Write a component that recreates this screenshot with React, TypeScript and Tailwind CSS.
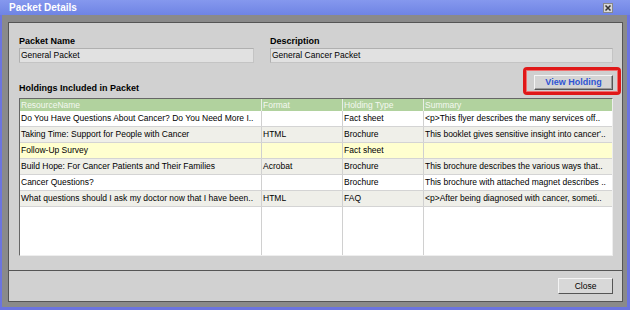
import React from "react";

const rows = [
  { name: "Do You Have Questions About Cancer? Do You Need More I..", format: "", type: "Fact sheet", summary: "<p>This flyer describes the many services off..", bg: "bg-white" },
  { name: "Taking Time: Support for People with Cancer", format: "HTML", type: "Brochure", summary: "This booklet gives sensitive insight into cancer'..", bg: "bg-[#efefe9]" },
  { name: "Follow-Up Survey", format: "", type: "Fact sheet", summary: "", bg: "bg-[#ffffcf]" },
  { name: "Build Hope: For Cancer Patients and Their Families", format: "Acrobat", type: "Brochure", summary: "This brochure describes the various ways that..", bg: "bg-[#efefe9]" },
  { name: "Cancer Questions?", format: "", type: "Brochure", summary: "This brochure with attached magnet describes ..", bg: "bg-white" },
  { name: "What questions should I ask my doctor now that I have been..", format: "HTML", type: "FAQ", summary: "<p>After being diagnosed with cancer, someti..", bg: "bg-[#efefe9]" },
];

const cols = ["w-[242px] shrink-0", "w-[81px] shrink-0", "w-[81px] shrink-0", "flex-1 min-w-0"];

export default function App() {
  return (
    <div
      className="w-[630px] h-[310px] bg-[#6b74e0] flex flex-col pl-[2px] pr-[3px] pb-[3px] overflow-hidden"
      style={{ fontFamily: '"Liberation Sans", Arial, sans-serif' }}
    >
      {/* Title bar */}
      <div className="h-[15px] -ml-[2px] -mr-[3px] pl-[9px] pr-[17px] flex items-center justify-between bg-gradient-to-b from-[#8598ee] to-[#6f84e4]">
        <span className="text-white font-bold text-[10px] leading-none">Packet Details</span>
        <div className="w-[10px] h-[10px] bg-[#d8d8d8] border border-[#888] flex items-center justify-center">
          <svg width="8" height="8" viewBox="0 0 8 8">
            <path d="M1.5 1.5 L6.5 6.5 M6.5 1.5 L1.5 6.5" stroke="#333" strokeWidth="1.5" />
          </svg>
        </div>
      </div>
      {/* Gray body */}
      <div className="flex-1 min-w-0 bg-[#8a8a8a] pt-[7px] pl-[6px] pr-[4px] pb-[5px] flex">
        <div className="flex-1 min-w-0 bg-[#d1d1d1] border border-[#555] flex flex-col">
          <div className="h-[247px] pl-[10px] pr-[9px] pt-[12px] flex flex-col min-w-0">
            {/* Fields */}
            <div className="flex gap-[16px] min-w-0">
              <div className="w-[235px] shrink-0 flex flex-col">
                <span className="font-bold text-[9px] leading-[12px] text-black">Packet Name</span>
                <div className="mt-[1px] h-[15px] bg-[#e1e1e1] border border-[#c4c4c4] border-t-[#b0b0b0] border-l-[#b0b0b0] flex items-center px-[1px] text-[8.5px] text-black">
                  General Packet
                </div>
              </div>
              <div className="flex-1 min-w-0 flex flex-col">
                <span className="font-bold text-[9px] leading-[12px] text-black">Description</span>
                <div className="mt-[1px] h-[15px] bg-[#e1e1e1] border border-[#c4c4c4] border-t-[#b0b0b0] border-l-[#b0b0b0] flex items-center px-[1px] text-[8.5px] text-black">
                  General Cancer Packet
                </div>
              </div>
            </div>
            {/* Holdings label + button */}
            <div className="mt-[4px] flex justify-between items-end">
              <span className="font-bold text-[9px] leading-[12px] text-black mb-[1px]">Holdings Included in Packet</span>
              <div className="-mr-[8px] rounded-[4px] border-[3px] border-[#e01818] shadow-[inset_0_0_0_1px_#f07070] pl-[8px] pr-[5px] pt-[5px] pb-[2px] bg-[#cfcfcf]">
                <div className="w-[79px] h-[15px] bg-[#d4d4d4] border border-[#f4f4f4] border-r-[#555] border-b-[#555] shadow-[inset_-1px_-1px_0_#999] flex items-center justify-center">
                  <span className="text-[#2f55d4] font-bold text-[9px] leading-none">View Holding</span>
                </div>
              </div>
            </div>
            {/* Grid */}
            <div className="mt-[3px] h-[158px] bg-white border border-[#666] border-r-[#eee] border-b-[#eee] flex flex-col text-[8.5px] min-w-0 overflow-hidden">
              <div className="h-[12px] bg-[#b1d29e] flex text-[#f4f8f0] leading-[12px]">
                {["ResourceName", "Format", "Holding Type", "Summary"].map((h, i) => (
                  <div key={h} className={`${cols[i]} ${i < 3 ? "border-r border-[#e8eee4]" : ""} pl-[1px] whitespace-nowrap overflow-hidden`}>{h}</div>
                ))}
              </div>
              {rows.map((r, ri) => (
                <div key={ri} className={`h-[16px] flex border-b border-[#d4d4d4] ${r.bg} text-black leading-[15px]`}>
                  {[r.name, r.format, r.type, r.summary].map((c, i) => (
                    <div key={i} className={`${cols[i]} ${i < 3 ? "border-r border-[#d0d0d0]" : ""} pl-[1px] whitespace-nowrap overflow-hidden`}>{c}</div>
                  ))}
                </div>
              ))}
              <div className="flex-1 flex">
                {cols.map((c, i) => (
                  <div key={i} className={`${c} ${i < 3 ? "border-r border-[#d0d0d0]" : ""}`} />
                ))}
              </div>
            </div>
          </div>
          {/* Footer */}
          <div className="flex-1 border-t border-[#555] flex justify-end items-start pt-[7px] pr-[9px]">
            <div className="w-[55px] h-[16px] bg-[#d8d8d8] border border-[#f4f4f4] border-r-[#555] border-b-[#555] flex items-center justify-center text-[8.5px] text-black">
              Close
            </div>
          </div>
        </div>
      </div>
    </div>
  );
}
